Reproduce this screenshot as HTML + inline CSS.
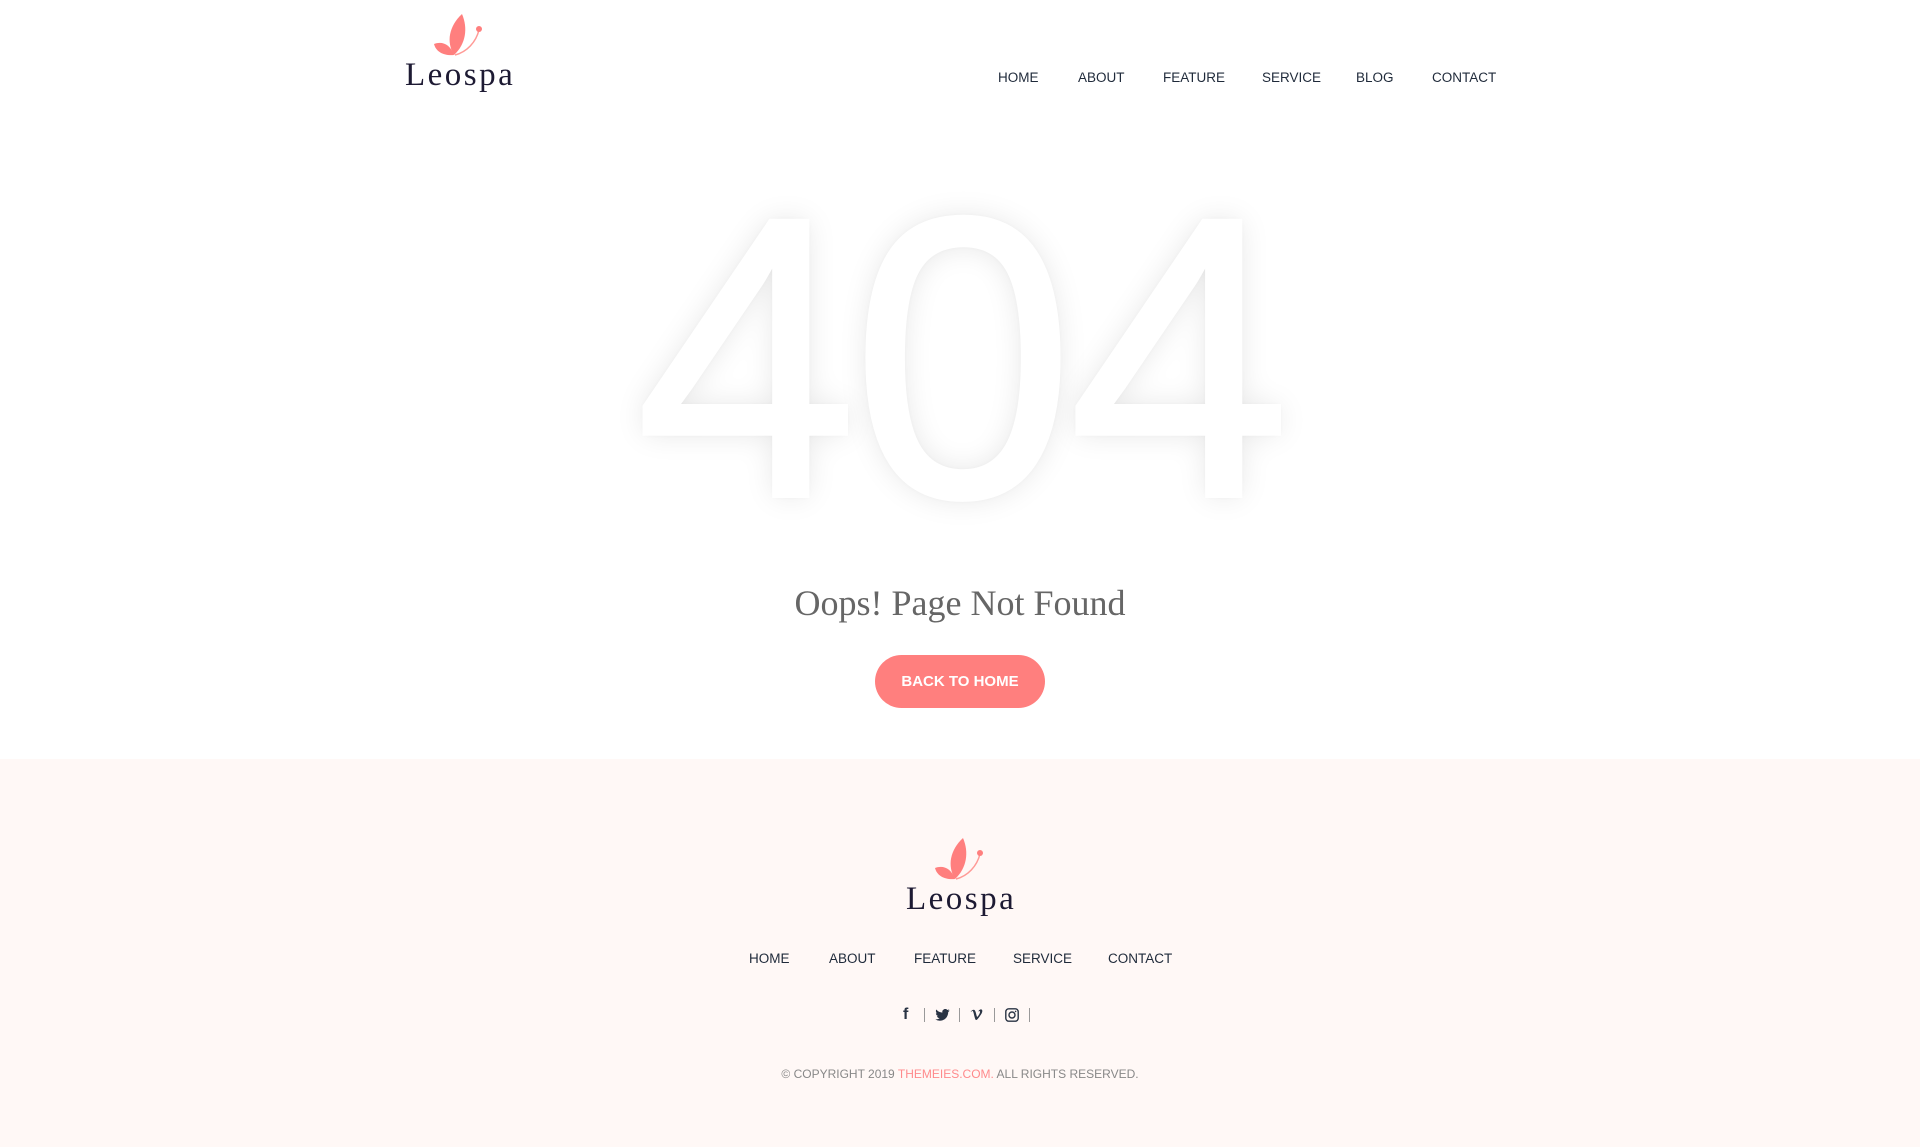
<!DOCTYPE html>
<html><head><meta charset="utf-8"><style>
*{margin:0;padding:0;box-sizing:border-box}
body{width:1920px;height:1147px;background:#fff;font-family:"Liberation Sans",sans-serif;position:relative;overflow:hidden}
.abs{position:absolute}
.logo{font-family:"Liberation Serif",serif;color:#1d1a33;font-size:33px;letter-spacing:2.5px;line-height:1}
.nav a{position:absolute;font-size:13.5px;color:#1f2a3a;text-decoration:none;line-height:1;white-space:nowrap}
.e404{left:0;width:1920px;text-align:center;top:158px;font-size:400px;line-height:1;color:#fff;letter-spacing:-6px;-webkit-text-stroke:4px #fff;text-shadow:0 0 30px rgba(0,0,0,0.10),0 0 6px rgba(0,0,0,0.06)}
.oops{left:0;width:1920px;text-align:center;top:582px;font-family:"Liberation Serif",serif;font-size:36px;color:#666}
.btn{left:875px;top:655px;width:170px;height:53px;border-radius:27px;background:#ff7f7e;color:#fff;font-weight:bold;font-size:15px;text-align:center;line-height:53px}
.foot{left:0;top:759px;width:1920px;height:388px;background:#fff8f6}
.social{top:1006px;font-size:14px;color:#2a3444}
.sep{position:absolute;top:1008px;width:1px;height:14px;background:#999}
</style></head><body>
<svg class="abs" style="left:432px;top:14px" width="56" height="44" viewBox="0 0 56 44">
<path d="M22 41 C14 28 17 12 30 0 C36 14 34 30 22 41Z" fill="#ff7f7e"/>
<path d="M22 41 C12 42 4 38 2 30 C10 27 18 30 22 41Z" fill="#ff7f7e"/>
<path d="M23 41 C35 38 44 28 47 16" stroke="#ff9a96" stroke-width="1.5" fill="none"/>
<circle cx="47" cy="15" r="3" fill="#ff7f7e"/>
</svg>
<div class="abs logo" style="left:405px;top:59px">Leospa</div>
<div class="nav">
<a style="left:998px;top:71px">HOME</a>
<a style="left:1078px;top:71px">ABOUT</a>
<a style="left:1163px;top:71px">FEATURE</a>
<a style="left:1262px;top:71px">SERVICE</a>
<a style="left:1356px;top:71px">BLOG</a>
<a style="left:1432px;top:71px">CONTACT</a>
</div>
<div class="abs e404">404</div>
<div class="abs oops">Oops! Page Not Found</div>
<div class="abs btn">BACK TO HOME</div>
<div class="abs foot"></div>
<svg class="abs" style="left:933px;top:838px" width="56" height="44" viewBox="0 0 56 44">
<path d="M22 41 C14 28 17 12 30 0 C36 14 34 30 22 41Z" fill="#ff7f7e"/>
<path d="M22 41 C12 42 4 38 2 30 C10 27 18 30 22 41Z" fill="#ff7f7e"/>
<path d="M23 41 C35 38 44 28 47 16" stroke="#ff9a96" stroke-width="1.5" fill="none"/>
<circle cx="47" cy="15" r="3" fill="#ff7f7e"/>
</svg>
<div class="abs logo" style="left:906px;top:883px">Leospa</div>
<div class="nav">
<a style="left:749px;top:952px">HOME</a>
<a style="left:829px;top:952px">ABOUT</a>
<a style="left:914px;top:952px">FEATURE</a>
<a style="left:1013px;top:952px">SERVICE</a>
<a style="left:1108px;top:952px">CONTACT</a>
</div>
<div class="abs social" style="left:903px;font-weight:bold;font-size:16px">f</div>
<div class="sep" style="left:924px"></div>
<svg class="abs" style="left:935px;top:1009px" width="15" height="12" viewBox="0 0 24 20"><path d="M24 2.4a10 10 0 0 1-2.8.8A5 5 0 0 0 23.3.4a10 10 0 0 1-3.1 1.2A4.9 4.9 0 0 0 11.8 6 14 14 0 0 1 1.7.9a4.9 4.9 0 0 0 1.5 6.6A5 5 0 0 1 1 6.9a4.9 4.9 0 0 0 3.9 4.8 5 5 0 0 1-2.2.1 4.9 4.9 0 0 0 4.6 3.4A9.9 9.9 0 0 1 0 17.3 14 14 0 0 0 7.5 19.5c9 0 14-7.5 14-14v-.6A10 10 0 0 0 24 2.4z" fill="#2a3444"/></svg>
<div class="sep" style="left:959px"></div>
<svg class="abs" style="left:970px;top:1009px" width="14" height="12" viewBox="0 0 24 20"><path d="M1 5 L4 3 C6 2 7 12 9 17 C10 19 11 19 13 17 C17 12 22 6 21 2 C20 -1 16 0 14 4 C16 3 18 3 17 6 C16 9 13 14 12 13 C10 8 10 1 6 1 C4 1 2 3 1 5Z" fill="#2a3444"/></svg>
<div class="sep" style="left:994px"></div>
<svg class="abs" style="left:1005px;top:1008px" width="14" height="14" viewBox="0 0 14 14"><rect x="0.8" y="0.8" width="12.4" height="12.4" rx="3" fill="none" stroke="#2a3444" stroke-width="1.4"/><circle cx="7" cy="7" r="3" fill="none" stroke="#2a3444" stroke-width="1.4"/><circle cx="10.6" cy="3.4" r="0.8" fill="#2a3444"/></svg>
<div class="sep" style="left:1029px"></div>
<div class="abs" style="left:0;width:1920px;text-align:center;top:1067px;font-size:12px;color:#888">© COPYRIGHT 2019 <span style="color:#ff8a8c">THEMEIES.COM.</span> ALL RIGHTS RESERVED.</div>
</body></html>
